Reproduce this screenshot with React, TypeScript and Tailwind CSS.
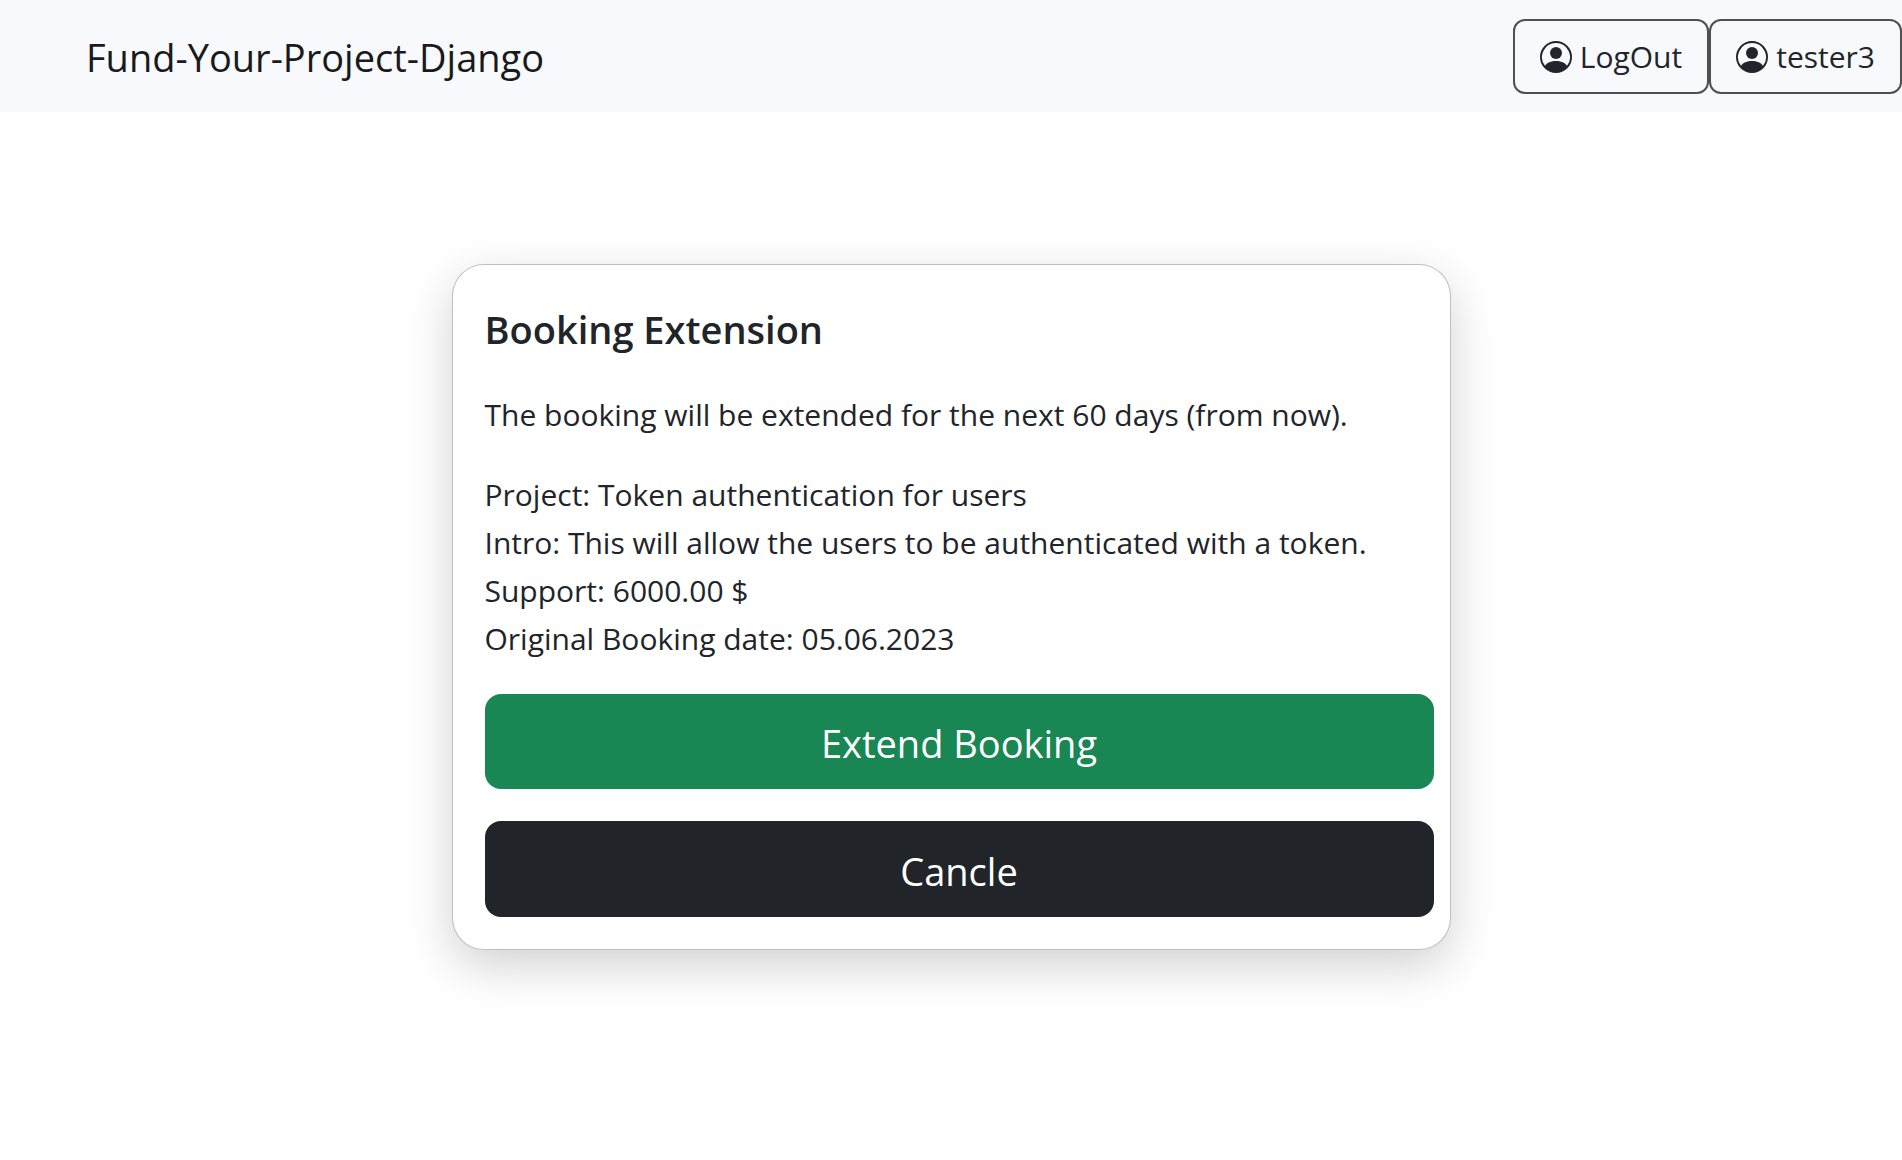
import { BsPersonCircle } from "react-icons/bs";

function NavButton({ label }: { label: string }) {
  return (
    <a
      href="#"
      className="flex h-[75px] items-center gap-2 rounded-xl border-2 border-[#4d5154] px-[25px] pt-0.5 text-[30px] leading-[48px] text-[#212529]"
    >
      <BsPersonCircle className="size-8" aria-hidden="true" />
      {label}
    </a>
  );
}

const details = [
  "Project: Token authentication for users",
  "Intro: This will allow the users to be authenticated with a token.",
  "Support: 6000.00 $",
  "Original Booking date: 05.06.2023",
];

export default function App() {
  return (
    <div className="min-h-screen bg-white font-['Open_Sans',sans-serif] text-[#212529]">
      <nav className="flex h-28 items-center justify-between bg-[#f8f9fc] pl-[86px]">
        <a href="#" className="pt-0.5 text-[38px] leading-[60px] text-[#191a1b]">
          Fund-Your-Project-Django
        </a>
        <div className="flex">
          <NavButton label="LogOut" />
          <NavButton label="tester3" />
        </div>
      </nav>
      <main className="flex justify-center pt-[152px]">
        <section className="w-full max-w-[999px] rounded-[32px] border border-black/25 bg-white pt-[34px] pr-4 pb-8 pl-8 shadow-[0_16px_48px_rgba(0,0,0,0.18)]">
          <h1 className="text-[38px] leading-[60px] font-semibold">Booking Extension</h1>
          <p className="mt-8 text-[30px] leading-[48px]">
            The booking will be extended for the next 60 days (from now).
          </p>
          <ul className="mt-8 text-[30px] leading-[48px]">
            {details.map((line) => (
              <li key={line}>{line}</li>
            ))}
          </ul>
          <div className="mt-[31px] flex flex-col gap-8">
            <button type="button" className="h-[95px] rounded-2xl bg-[#198754] pt-1 text-[38px] text-white">
              Extend Booking
            </button>
            <button type="button" className="h-24 rounded-2xl bg-[#212529] pt-1 text-[38px] text-white">
              Cancle
            </button>
          </div>
        </section>
      </main>
    </div>
  );
}
